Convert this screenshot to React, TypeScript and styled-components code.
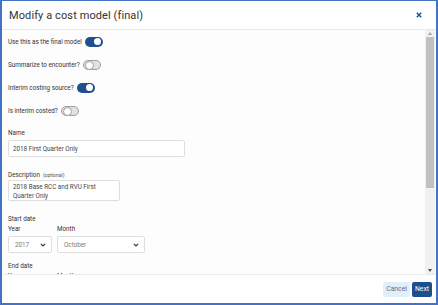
import React from "react";
import styled, { createGlobalStyle } from "styled-components";

const GlobalStyle = createGlobalStyle`
  html, body { margin: 0; padding: 0; background: #ffffff; }
  body { font-family: Roboto, "Liberation Sans", Arial, sans-serif; }
  * { box-sizing: border-box; }
`;

const Dialog = styled.div`
  width: 438px;
  height: 305px;
  border: 2px solid #4472c4;
  border-top-width: 1px;
  background: #ffffff;
  display: flex;
  flex-direction: column;
  overflow: hidden;
`;

const Header = styled.div`
  height: 29px;
  flex: 0 0 29px;
  border-bottom: 1px solid #ebebeb;
  display: flex;
  align-items: center;
  justify-content: space-between;
  padding: 0 13px 0 7px;
`;

const Title = styled.div`
  font-size: 11px;
  color: #333333;
  letter-spacing: 0.1px;
`;

const CloseButton = styled.div`
  width: 8px;
  height: 8px;
  display: flex;
  align-items: center;
  justify-content: center;
`;

const BodyWrap = styled.div`
  flex: 1;
  min-height: 0;
  display: flex;
  border-bottom: 1px solid #ececec;
  background: #fdfdfd;
`;

const Content = styled.div`
  flex: 1;
  overflow: hidden;
  padding: 0 6px;
`;

const ScrollColumn = styled.div`
  width: 10px;
  margin-right: 1px;
  background: #f1f1f1;
  display: flex;
  flex-direction: column;
  align-items: center;
`;

const ScrollArrow = styled.div`
  height: 7px;
  width: 10px;
  display: flex;
  align-items: center;
  justify-content: center;
`;

const ScrollTrack = styled.div`
  flex: 1;
  width: 100%;
  padding: 0 1px;
`;

const ScrollThumb = styled.div`
  height: 151px;
  width: 100%;
  background: #c1c1c1;
`;

const ToggleRow = styled.div`
  height: 23px;
  display: flex;
  align-items: center;
  gap: 3px;
  font-size: 6.3px;
  color: #333333;
`;

const Toggle = styled.div<{ $on: boolean }>`
  width: 18px;
  height: 10px;
  border-radius: 5px;
  position: relative;
  background: ${(p) => (p.$on ? "#1f4f8e" : "#e2e2e2")};
  border: ${(p) => (p.$on ? "none" : "1px solid #a0a0a0")};
  &::after {
    content: "";
    position: absolute;
    top: ${(p) => (p.$on ? "1.5px" : "0.5px")};
    ${(p) => (p.$on ? "right: 2px;" : "left: 1px;")}
    width: 7px;
    height: 7px;
    border-radius: 50%;
    background: #ffffff;
    border: ${(p) => (p.$on ? "none" : "0.8px solid #a0a0a0")};
  }
`;

const Label = styled.div<{ $mt?: number }>`
  font-size: 6.3px;
  line-height: 10px;
  height: 10px;
  color: #333333;
  margin-top: ${(p) => p.$mt ?? 0}px;
`;

const Optional = styled.span`
  font-size: 5px;
  color: #555555;
  margin-left: 3px;
`;

const TextInput = styled.div<{ $mt?: number }>`
  width: 177px;
  height: 17px;
  margin-top: ${(p) => p.$mt ?? 0}px;
  border: 1px solid #dedede;
  border-radius: 2px;
  background: #ffffff;
  font-size: 6.3px;
  color: #444444;
  display: flex;
  align-items: center;
  padding-left: 4px;
`;

const TextArea = styled.div`
  width: 112px;
  height: 21px;
  border: 1px solid #dedede;
  border-radius: 2px;
  background: #ffffff;
  font-size: 6.3px;
  line-height: 9px;
  color: #444444;
  padding: 1.5px 4px 0;
`;

const SelectRow = styled.div`
  display: flex;
  gap: 5px;
`;

const SelectCol = styled.div<{ $w: number }>`
  width: ${(p) => p.$w}px;
  display: flex;
  flex-direction: column;
`;

const Select = styled.div`
  margin-top: 2px;
  height: 17px;
  border: 1px solid #dedede;
  border-radius: 2px;
  background: #ffffff;
  display: flex;
  align-items: center;
  justify-content: space-between;
  padding: 0 5px 0 6px;
  font-size: 6.3px;
  color: #777777;
`;

const Footer = styled.div`
  height: 28px;
  flex: 0 0 28px;
  display: flex;
  align-items: center;
  justify-content: flex-end;
  gap: 2px;
  padding-right: 4px;
  background: #ffffff;
`;

const Button = styled.div<{ $primary?: boolean }>`
  height: 15px;
  padding: 0 3px;
  border-radius: 2px;
  display: flex;
  align-items: center;
  font-size: 6.8px;
  background: ${(p) => (p.$primary ? "#1d4f8c" : "#e3eefb")};
  color: ${(p) => (p.$primary ? "#ffffff" : "#5b7191")};
`;

const Chevron = () => (
  <svg width="6" height="4" viewBox="0 0 6 4">
    <path d="M0.8 0.8 L3 3 L5.2 0.8" fill="none" stroke="#333" strokeWidth="1.1" />
  </svg>
);

export default function App() {
  return (
    <>
      <GlobalStyle />
      <Dialog>
        <Header>
          <Title>Modify a cost model (final)</Title>
          <CloseButton>
            <svg width="6" height="6" viewBox="0 0 6 6">
              <path d="M0.8 0.8 L5.2 5.2 M5.2 0.8 L0.8 5.2" stroke="#1f4f8e" strokeWidth="1.4" />
            </svg>
          </CloseButton>
        </Header>
        <BodyWrap>
          <Content>
            <ToggleRow>
              Use this as the final model <Toggle $on />
            </ToggleRow>
            <ToggleRow>
              Summarize to encounter? <Toggle $on={false} />
            </ToggleRow>
            <ToggleRow>
              Interim costing source? <Toggle $on />
            </ToggleRow>
            <ToggleRow>
              Is interim costed? <Toggle $on={false} />
            </ToggleRow>

            <Label $mt={6}>Name</Label>
            <TextInput $mt={2}>2018 First Quarter Only</TextInput>

            <Label $mt={13}>
              Description<Optional>(optional)</Optional>
            </Label>
            <TextArea>
              2018 Base RCC and RVU First
              <br />
              Quarter Only
            </TextArea>

            <Label $mt={13}>Start date</Label>
            <SelectRow>
              <SelectCol $w={44}>
                <Label>Year</Label>
                <Select>
                  2017 <Chevron />
                </Select>
              </SelectCol>
              <SelectCol $w={88}>
                <Label>Month</Label>
                <Select>
                  October <Chevron />
                </Select>
              </SelectCol>
            </SelectRow>

            <Label $mt={8}>End date</Label>
            <SelectRow>
              <SelectCol $w={44}>
                <Label>Year</Label>
              </SelectCol>
              <SelectCol $w={88}>
                <Label>Month</Label>
              </SelectCol>
            </SelectRow>
          </Content>
          <ScrollColumn>
            <ScrollArrow>
              <svg width="4" height="3" viewBox="0 0 4 3">
                <path d="M0 3 L2 0 L4 3 Z" fill="#a3a3a3" />
              </svg>
            </ScrollArrow>
            <ScrollTrack>
              <ScrollThumb />
            </ScrollTrack>
            <ScrollArrow>
              <svg width="4" height="3" viewBox="0 0 4 3">
                <path d="M0 0 L2 3 L4 0 Z" fill="#505050" />
              </svg>
            </ScrollArrow>
          </ScrollColumn>
        </BodyWrap>
        <Footer>
          <Button>Cancel</Button>
          <Button $primary>Next</Button>
        </Footer>
      </Dialog>
    </>
  );
}
